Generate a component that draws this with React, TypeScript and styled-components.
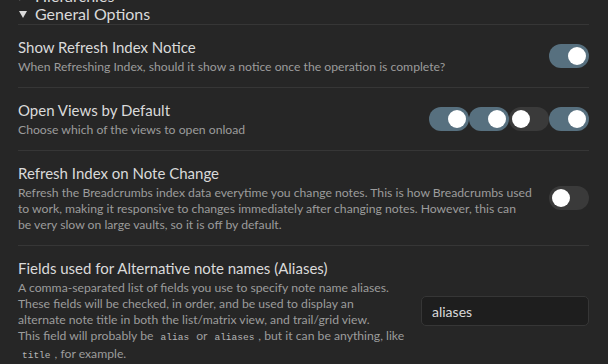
import React from 'react';
import styled, { createGlobalStyle } from 'styled-components';

const GlobalStyle = createGlobalStyle`
  html, body {
    margin: 0;
    padding: 0;
    background: #262626;
    overflow: hidden;
  }
  body {
    font-family: 'Segoe UI', Lato, 'Liberation Sans', sans-serif;
    color: #dadada;
  }
`;

const Page = styled.div`
  width: 608px;
  height: 364px;
  overflow: hidden;
  padding: 0 19px 0 18px;
  box-sizing: border-box;
`;

const Summary = styled.div<{ cut?: boolean }>`
  display: flex;
  align-items: center;
  height: ${p => (p.cut ? '16px' : '20px')};
  line-height: ${p => (p.cut ? '16px' : '20px')};
  margin-top: ${p => (p.cut ? '-12px' : '0')};
  font-size: 16px;
  color: #dadada;
  border-bottom: ${p => (p.cut ? 'none' : '1px solid #363636')};
`;

const Marker = styled.span<{ open?: boolean }>`
  display: inline-block;
  width: 0;
  height: 0;
  margin: 0 8px 0 1px;
  border-left: 4px solid transparent;
  border-right: 4px solid transparent;
  border-top: 7px solid #dadada;
  transform: ${p => (p.open ? 'none' : 'rotate(-90deg)')};
`;

const Item = styled.div`
  display: flex;
  align-items: center;
  padding: 12px 0;
  border-bottom: 1px solid #363636;
`;

const Info = styled.div`
  flex: 1;
  min-width: 0;
  margin-right: 16px;
`;

const Name = styled.div`
  font-size: 15px;
  line-height: 20px;
  color: #dadada;
`;

const Desc = styled.div<{ nowrap?: boolean }>`
  font-size: 12.2px;
  line-height: 16px;
  padding-top: 2px;
  color: #9c9c9c;
  white-space: ${p => (p.nowrap ? 'nowrap' : 'normal')};
`;

const Code = styled.code`
  font-family: 'Liberation Mono', 'DejaVu Sans Mono', monospace;
  font-size: 9.5px;
  color: #b5b5b5;
  padding: 0 4px;
`;

const Control = styled.div`
  display: flex;
  align-items: center;
  flex-shrink: 0;
`;

const Toggle = styled.div<{ on?: boolean }>`
  position: relative;
  width: 40px;
  height: 24px;
  border-radius: 12px;
  background: ${p => (p.on ? '#57707f' : '#3a3a3a')};

  &::after {
    content: '';
    position: absolute;
    top: 3px;
    left: ${p => (p.on ? '19px' : '3px')};
    width: 18px;
    height: 18px;
    border-radius: 50%;
    background: #ffffff;
  }
`;

const TextInput = styled.div`
  width: 168px;
  height: 30px;
  box-sizing: border-box;
  padding: 0 10px;
  display: flex;
  align-items: center;
  background: #1e1e1e;
  border: 1px solid #363636;
  border-radius: 5px;
  font-size: 14px;
  color: #dadada;
`;

export default function App() {
  return (
    <>
      <GlobalStyle />
      <Page>
        <Summary cut>
          <Marker />
          Hierarchies
        </Summary>
        <Summary>
          <Marker open />
          General Options
        </Summary>

        <Item>
          <Info>
            <Name>Show Refresh Index Notice</Name>
            <Desc>When Refreshing Index, should it show a notice once the operation is complete?</Desc>
          </Info>
          <Control>
            <Toggle on />
          </Control>
        </Item>

        <Item>
          <Info>
            <Name>Open Views by Default</Name>
            <Desc>Choose which of the views to open onload</Desc>
          </Info>
          <Control>
            <Toggle on />
            <Toggle on />
            <Toggle />
            <Toggle on />
          </Control>
        </Item>

        <Item>
          <Info>
            <Name>Refresh Index on Note Change</Name>
            <Desc nowrap>
              Refresh the Breadcrumbs index data everytime you change notes. This is how Breadcrumbs used
              <br />
              to work, making it responsive to changes immediately after changing notes. However, this can
              <br />
              be very slow on large vaults, so it is off by default.
            </Desc>
          </Info>
          <Control>
            <Toggle />
          </Control>
        </Item>

        <Item>
          <Info>
            <Name>Fields used for Alternative note names (Aliases)</Name>
            <Desc nowrap>
              A comma-separated list of fields you use to specify note name aliases.
              <br />
              These fields will be checked, in order, and be used to display an
              <br />
              alternate note title in both the list/matrix view, and trail/grid view.
              <br />
              This field will probably be <Code>alias</Code> or <Code>aliases</Code>, but it can be anything, like
              <br />
              <Code>title</Code>, for example.
            </Desc>
          </Info>
          <Control>
            <TextInput>aliases</TextInput>
          </Control>
        </Item>
      </Page>
    </>
  );
}
